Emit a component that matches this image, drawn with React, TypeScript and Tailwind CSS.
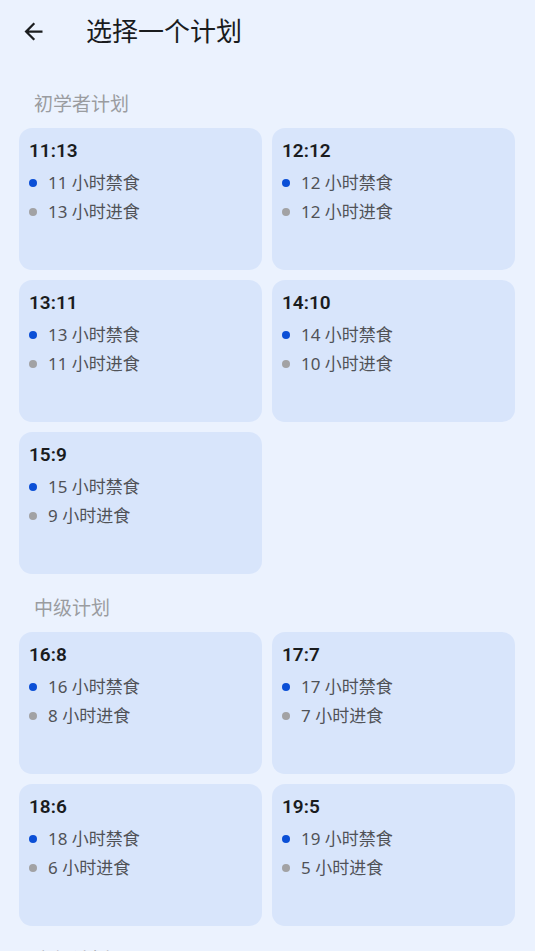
type Plan = { fast: number; eat: number }

const sections: { title: string; plans: Plan[] }[] = [
    {
        title: '初学者计划',
        plans: [
            { fast: 11, eat: 13 },
            { fast: 12, eat: 12 },
            { fast: 13, eat: 11 },
            { fast: 14, eat: 10 },
            { fast: 15, eat: 9 },
        ],
    },
    {
        title: '中级计划',
        plans: [
            { fast: 16, eat: 8 },
            { fast: 17, eat: 7 },
            { fast: 18, eat: 6 },
            { fast: 19, eat: 5 },
        ],
    },
    {
        title: '高级计划',
        plans: [
            { fast: 20, eat: 4 },
            { fast: 21, eat: 3 },
        ],
    },
]

function PlanCard({ plan }: { plan: Plan }) {
    return (
        <div className="h-[142px] rounded-[13px] bg-[#d8e5fb] px-[10px] pt-3">
            <div className="text-[19px] font-semibold leading-[22px] text-[#1a1c1e] [font-family:Roboto,sans-serif]">
                {plan.fast}:{plan.eat}
            </div>
            <div className="mt-[6px]">
                <div className="flex h-[29px] items-center">
                    <span className="h-2 w-2 rounded-full bg-[#0b4fd6]" />
                    <span className="ml-[11px] text-[17px] leading-[29px] text-[#505257]">
                        {plan.fast} 小时禁食
                    </span>
                </div>
                <div className="flex h-[29px] items-center">
                    <span className="h-2 w-2 rounded-full bg-[#a2a2a4]" />
                    <span className="ml-[11px] text-[17px] leading-[29px] text-[#505257]">
                        {plan.eat} 小时进食
                    </span>
                </div>
            </div>
        </div>
    )
}

export default function App() {
    return (
        <main
            className="h-[951px] w-full overflow-hidden bg-[#ebf2fe]"
            style={{ fontFamily: "'Noto Sans', 'Noto Sans CJK SC', sans-serif" }}
        >
            <header className="flex h-[70px] items-center pb-2">
                <svg
                    viewBox="0 0 24 24"
                    className="ml-[20px] h-[27px] w-[27px] fill-[#1a1c1e]"
                >
                    <path d="M20 11H7.83l5.59-5.59L12 4l-8 8 8 8 1.41-1.41L7.83 13H20v-2z" />
                </svg>
                <h1 className="ml-[39px] text-[26px] leading-8 font-normal text-[#1a1c1e]">
                    选择一个计划
                </h1>
            </header>
            {sections.map((s) => (
                <section key={s.title} className="pt-[22px]">
                    <div className="mb-3 pl-[34px] text-[19px] leading-6 text-[#9a9ca0]">
                        {s.title}
                    </div>
                    <div className="grid grid-cols-2 gap-[10px] pl-[19px] pr-[20px]">
                        {s.plans.map((p) => (
                            <PlanCard key={p.fast} plan={p} />
                        ))}
                    </div>
                </section>
            ))}
        </main>
    )
}
